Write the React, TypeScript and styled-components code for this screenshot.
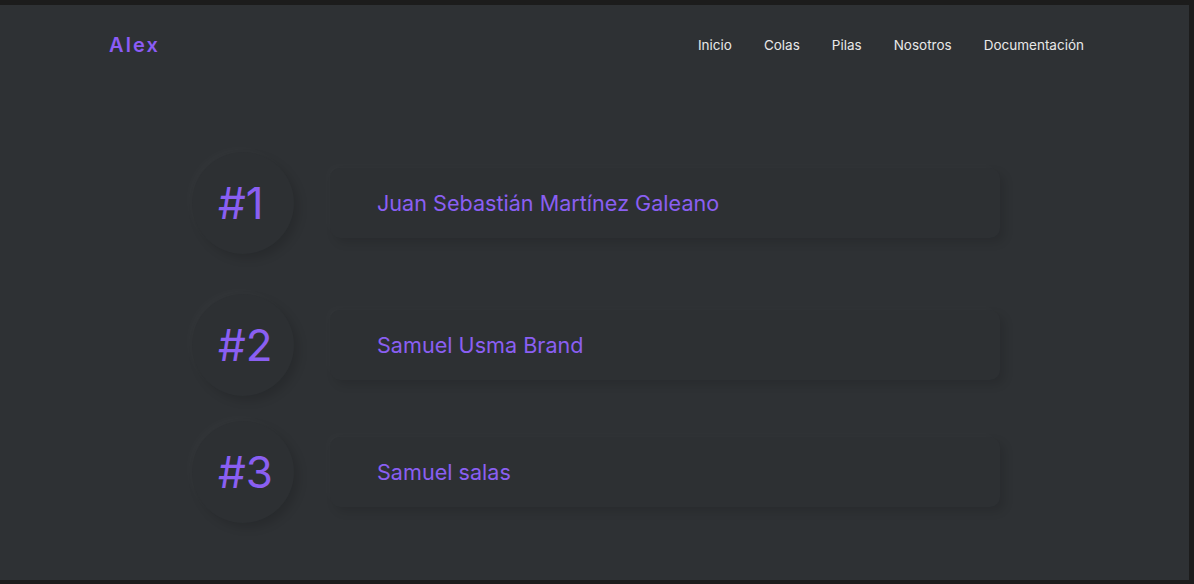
import React from "react";
import styled, { createGlobalStyle } from "styled-components";

const Global = createGlobalStyle`
  html, body { margin: 0; padding: 0; background: #1c1c1c; }
  body { font-family: Inter, "Noto Sans", sans-serif; }
`;

const Frame = styled.div`
  box-sizing: border-box;
  width: 1189px;
  height: 575px;
  margin-top: 5px;
  background: #2e3134;
  display: flex;
  flex-direction: column;
`;

const Header = styled.header`
  height: 80px;
  display: flex;
  align-items: center;
  justify-content: space-between;
  padding: 0 105px 0 109px;
`;

const Logo = styled.div`
  color: #8b5cf6;
  font-size: 20px;
  font-weight: 600;
  letter-spacing: 2.1px;
`;

const Nav = styled.nav`
  display: flex;
  gap: 32px;
`;

const NavLink = styled.a`
  color: #e8e8e8;
  font-size: 13.5px;
  text-decoration: none;
`;

const List = styled.main`
  display: flex;
  flex-direction: column;
  padding: 58px 0 0 192px;
`;

const Row = styled.div<{ $space: number }>`
  display: flex;
  align-items: center;
  height: 120px;
  margin-bottom: ${(p) => p.$space}px;
`;

const Badge = styled.div`
  width: 102px;
  height: 102px;
  border-radius: 50%;
  background: #2d3033;
  box-shadow: 5px 5px 10px rgba(0, 0, 0, 0.13), -4px -4px 9px rgba(255, 255, 255, 0.018);
  display: flex;
  align-items: center;
  justify-content: flex-start;
  padding-left: 26px;
  box-sizing: border-box;
  color: #8a5ff2;
  font-size: 44px;
  font-weight: 400;
  flex-shrink: 0;
`;

const Card = styled.div`
  margin-left: 36px;
  width: 670px;
  height: 70px;
  border-radius: 10px;
  background: #2d3033;
  box-shadow: 5px 5px 10px rgba(0, 0, 0, 0.11), -4px -4px 9px rgba(255, 255, 255, 0.016);
  display: flex;
  align-items: center;
  padding-left: 47px;
  box-sizing: border-box;
  color: #8a5ff2;
  font-size: 21.6px;
`;

const people = [
  { n: "#1", name: "Juan Sebastián Martínez Galeano", space: 22 },
  { n: "#2", name: "Samuel Usma Brand", space: 7 },
  { n: "#3", name: "Samuel salas", space: 0 },
];

export default function App() {
  return (
    <>
      <Global />
      <Frame>
        <Header>
          <Logo>Alex</Logo>
          <Nav>
            <NavLink>Inicio</NavLink>
            <NavLink>Colas</NavLink>
            <NavLink>Pilas</NavLink>
            <NavLink>Nosotros</NavLink>
            <NavLink>Documentación</NavLink>
          </Nav>
        </Header>
        <List>
          {people.map((p) => (
            <Row key={p.n} $space={p.space}>
              <Badge>{p.n}</Badge>
              <Card>{p.name}</Card>
            </Row>
          ))}
        </List>
      </Frame>
    </>
  );
}
